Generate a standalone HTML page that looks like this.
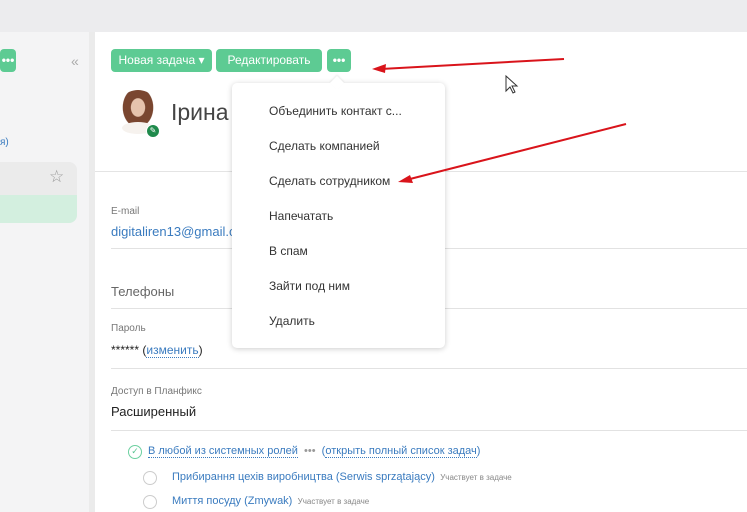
<!DOCTYPE html>
<html><head><meta charset="utf-8"><style>
*{margin:0;padding:0;box-sizing:border-box}
body{width:747px;height:512px;overflow:hidden;background:#fff;font-family:"Liberation Sans","DejaVu Sans",sans-serif;position:relative;color:#222}
.a{position:absolute;white-space:nowrap}
.btn{position:absolute;top:49px;height:23px;background:#5dcb93;border-radius:4px;color:#fff;font-size:12px;line-height:23px;text-align:center}
.lbl{font-size:10px;color:#777}
.hr{position:absolute;left:111px;right:0;height:1px;background:#e2e2e2}
.mi{position:absolute;left:37px;font-size:12px;color:#333}
.lnk{color:#3a7bbf}
.circ{position:absolute;width:14px;height:14px;border:1.5px solid #ccc;border-radius:50%}
</style></head><body>
<div class="a" style="left:0;top:0;width:747px;height:32px;background:#ececee"></div>
<div class="a" style="left:0;top:32px;width:89px;height:480px;background:#f4f4f5"></div>
<div class="a" style="left:89px;top:32px;width:6px;height:480px;background:#ebebeb"></div>
<div class="btn" style="left:0;width:16px;font-weight:bold">•••</div>
<div class="a" style="left:71px;top:53px;font-size:14px;color:#aaa">«</div>
<div class="a lnk" style="left:0;top:137px;font-size:10px">я)</div>
<div class="a" style="left:0;top:162px;width:77px;height:61px;background:#ebebeb;border-radius:0 8px 8px 0"></div>
<div class="a" style="left:0;top:195px;width:77px;height:28px;background:#d3efdf;border-radius:0 0 8px 0"></div>
<div class="a" style="left:49px;top:167px;font-size:17px;color:#999">☆</div>

<div class="btn" style="left:111px;width:101px">Новая задача ▾</div>
<div class="btn" style="left:216px;width:106px">Редактировать</div>
<div class="btn" style="left:327px;width:24px;font-weight:bold">•••</div>

<div class="a" style="left:116px;top:90px;width:44px;height:46px;border-radius:50%;background:radial-gradient(ellipse at 50% 38%,#e6c3ad 0 22%,#7a4630 24% 48%,#fff 50%)"></div>
<div class="a" style="left:122px;top:122px;width:32px;height:12px;border-radius:50%;background:#f6f2ee"></div>
<div class="a" style="left:146px;top:124px;width:14px;height:14px;border-radius:50%;background:#1f8a4c;border:1.5px solid #fff;color:#fff;font-size:8px;line-height:11px;text-align:center">✎</div>
<div class="a" style="left:171px;top:99px;font-size:23px;color:#444">Ірина</div>
<div class="a" style="left:95px;top:171px;width:652px;height:1px;background:#e4e4e4"></div>

<div class="a lbl" style="left:111px;top:206px">E-mail</div>
<div class="a lnk" style="left:111px;top:224px;font-size:13px">digitaliren13@gmail.com</div>
<div class="hr" style="top:248px"></div>
<div class="a" style="left:111px;top:284px;font-size:13px;color:#666">Телефоны</div>
<div class="hr" style="top:308px"></div>
<div class="a lbl" style="left:111px;top:323px">Пароль</div>
<div class="a" style="left:111px;top:343px;font-size:12px">****** (<span class="lnk" style="border-bottom:1px dotted #3a7bbf">изменить</span>)</div>
<div class="hr" style="top:368px"></div>
<div class="a lbl" style="left:111px;top:386px">Доступ в Планфикс</div>
<div class="a" style="left:111px;top:404px;font-size:13px">Расширенный</div>
<div class="hr" style="top:430px"></div>
<div class="a" style="left:128px;top:445px;width:14px;height:14px;border:1.5px solid #6cd0a0;border-radius:50%;color:#5cc493;font-size:9px;line-height:11px;text-align:center">✓</div>
<div class="a" style="left:148px;top:445px;font-size:11px"><span class="lnk" style="border-bottom:1px dotted #3a7bbf">В любой из системных ролей</span> <span style="color:#999">&nbsp;•••&nbsp;</span> <span class="lnk">(<span style="border-bottom:1px dotted #3a7bbf">открыть полный список задач</span>)</span></div>
<div class="circ" style="left:143px;top:471px"></div>
<div class="a" style="left:172px;top:471px;font-size:11px"><span class="lnk">Прибирання цехів виробництва (Serwis sprzątający)</span> <span style="font-size:8px;color:#888">&nbsp;Участвует в задаче</span></div>
<div class="circ" style="left:143px;top:495px"></div>
<div class="a" style="left:172px;top:495px;font-size:11px"><span class="lnk">Миття посуду (Zmywak)</span> <span style="font-size:8px;color:#888">&nbsp;Участвует в задаче</span></div>

<div class="a" style="left:232px;top:83px;width:213px;height:265px;background:#fff;border-radius:5px;box-shadow:0 1px 6px rgba(0,0,0,.2)">
<div class="a" style="left:100px;top:-5px;width:10px;height:10px;background:#fff;transform:rotate(45deg);box-shadow:-1px -1px 2px rgba(0,0,0,.08)"></div>
<div class="mi" style="top:21px">Объединить контакт с...</div>
<div class="mi" style="top:56px">Сделать компанией</div>
<div class="mi" style="top:91px">Сделать сотрудником</div>
<div class="mi" style="top:126px">Напечатать</div>
<div class="mi" style="top:161px">В спам</div>
<div class="mi" style="top:196px">Зайти под ним</div>
<div class="mi" style="top:231px">Удалить</div>
</div>

<svg class="a" style="left:0;top:0" width="747" height="512">
<g stroke="#d9141b" stroke-width="2" fill="#d9141b">
<line x1="564" y1="59" x2="380" y2="69"/>
<polygon points="372,69 386,64 385,73" stroke="none"/>
<line x1="626" y1="124" x2="406" y2="180"/>
<polygon points="398,182 410,175 413,183" stroke="none"/>
</g>
<path d="M506 76 L506 91 L510 87 L513 93 L515 92 L512 86 L517 86 Z" fill="#fff" stroke="#333" stroke-width="1"/>
</svg>
</body></html>
